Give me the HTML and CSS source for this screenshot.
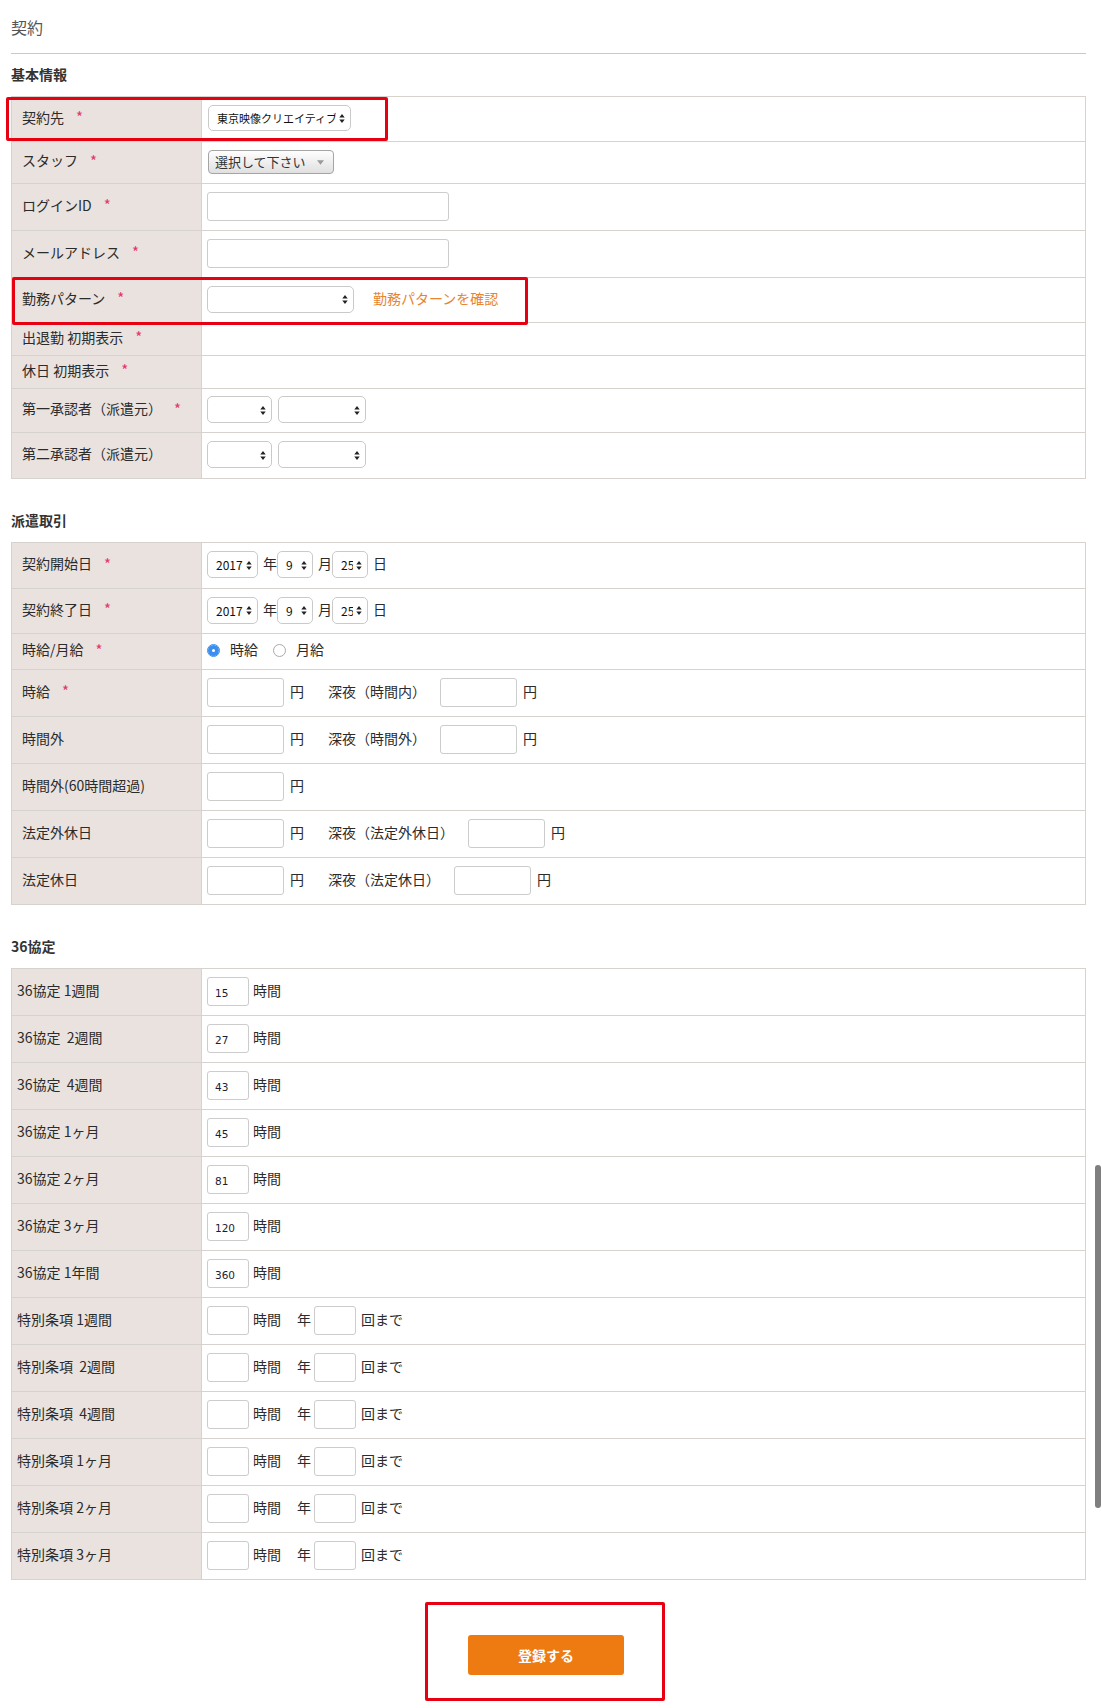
FILE: index.html
```html
<!DOCTYPE html>
<html lang="ja">
<head>
    <meta charset="UTF-8">
    <meta name="viewport" content="width=device-width, initial-scale=1.0">
    <title>契約</title>
    <link rel="stylesheet" href="styles.css">
</head>
<body>
    <!-- shared select arrows -->
    <svg class="svg-defs" aria-hidden="true">
        <symbol id="updown" viewBox="0 0 6 10"><path d="M0 4L3 0L6 4Z M0 6L3 10L6 6Z"/></symbol>
        <symbol id="down" viewBox="0 0 8 5"><path d="M0 0H8L4 5Z"/></symbol>
    </svg>

    <div class="page">
        <h1 class="page-title">契約</h1>

        <!-- 基本情報 -->
        <h2 class="section-title first">基本情報</h2>
        <div class="form-table">
            <div class="row h45">
                <div class="label">契約先<span class="req">*</span></div>
                <div class="value">
                    <span class="select-wrap"><select class="sel sel-client"><option>東京映像クリエイティブ</option></select><svg class="arrows"><use href="#updown"/></svg></span>
                </div>
            </div>
            <div class="row h42">
                <div class="label">スタッフ<span class="req">*</span></div>
                <div class="value">
                    <span class="select-wrap"><select class="btn-select"><option>選択して下さい</option></select><svg class="arrow-down"><use href="#down"/></svg></span>
                </div>
            </div>
            <div class="row">
                <div class="label">ログインID<span class="req">*</span></div>
                <div class="value"><input type="text" class="text"></div>
            </div>
            <div class="row">
                <div class="label">メールアドレス<span class="req">*</span></div>
                <div class="value"><input type="text" class="text"></div>
            </div>
            <div class="row h45">
                <div class="label">勤務パターン<span class="req">*</span></div>
                <div class="value">
                    <span class="select-wrap"><select class="sel sel-pattern"><option></option></select><svg class="arrows"><use href="#updown"/></svg></span>
                    <a href="#" class="link">勤務パターンを確認</a>
                </div>
            </div>
            <div class="row h33">
                <div class="label">出退勤 初期表示<span class="req">*</span></div>
                <div class="value"></div>
            </div>
            <div class="row h33">
                <div class="label">休日 初期表示<span class="req">*</span></div>
                <div class="value"></div>
            </div>
            <div class="row h44">
                <div class="label">第一承認者（派遣元）<span class="req">*</span></div>
                <div class="value">
                    <span class="select-wrap"><select class="sel sel-ap1"><option></option></select><svg class="arrows"><use href="#updown"/></svg></span>
                    <span class="select-wrap gap6"><select class="sel sel-ap2"><option></option></select><svg class="arrows"><use href="#updown"/></svg></span>
                </div>
            </div>
            <div class="row h46">
                <div class="label">第二承認者（派遣元）</div>
                <div class="value">
                    <span class="select-wrap"><select class="sel sel-ap1"><option></option></select><svg class="arrows"><use href="#updown"/></svg></span>
                    <span class="select-wrap gap6"><select class="sel sel-ap2"><option></option></select><svg class="arrows"><use href="#updown"/></svg></span>
                </div>
            </div>
        </div>

        <!-- 派遣取引 -->
        <h2 class="section-title">派遣取引</h2>
        <div class="form-table">
            <div class="row h46">
                <div class="label">契約開始日<span class="req">*</span></div>
                <div class="value">
                    <span class="select-wrap"><select class="sel sel-year"><option>2017</option></select><svg class="arrows"><use href="#updown"/></svg></span>
                    <span class="unit-after-sel">年</span>
                    <span class="select-wrap"><select class="sel sel-md"><option>9</option></select><svg class="arrows"><use href="#updown"/></svg></span>
                    <span class="unit-after-sel">月</span>
                    <span class="select-wrap"><select class="sel sel-md"><option>25</option></select><svg class="arrows"><use href="#updown"/></svg></span>
                    <span class="unit-after-sel">日</span>
                </div>
            </div>
            <div class="row h45">
                <div class="label">契約終了日<span class="req">*</span></div>
                <div class="value">
                    <span class="select-wrap"><select class="sel sel-year"><option>2017</option></select><svg class="arrows"><use href="#updown"/></svg></span>
                    <span class="unit-after-sel">年</span>
                    <span class="select-wrap"><select class="sel sel-md"><option>9</option></select><svg class="arrows"><use href="#updown"/></svg></span>
                    <span class="unit-after-sel">月</span>
                    <span class="select-wrap"><select class="sel sel-md"><option>25</option></select><svg class="arrows"><use href="#updown"/></svg></span>
                    <span class="unit-after-sel">日</span>
                </div>
            </div>
            <div class="row h36">
                <div class="label">時給/月給<span class="req">*</span></div>
                <div class="value">
                    <label class="radio-label"><input type="radio" name="pay" class="radio" checked>時給</label>
                    <label class="radio-label second"><input type="radio" name="pay" class="radio">月給</label>
                </div>
            </div>
            <div class="row">
                <div class="label">時給<span class="req">*</span></div>
                <div class="value">
                    <input type="text" class="num"><span class="yen">円</span>
                    <span class="night">深夜（時間内）</span>
                    <input type="text" class="num"><span class="yen">円</span>
                </div>
            </div>
            <div class="row">
                <div class="label">時間外</div>
                <div class="value">
                    <input type="text" class="num"><span class="yen">円</span>
                    <span class="night">深夜（時間外）</span>
                    <input type="text" class="num"><span class="yen">円</span>
                </div>
            </div>
            <div class="row">
                <div class="label">時間外(60時間超過)</div>
                <div class="value">
                    <input type="text" class="num"><span class="yen">円</span>
                </div>
            </div>
            <div class="row">
                <div class="label">法定外休日</div>
                <div class="value">
                    <input type="text" class="num"><span class="yen">円</span>
                    <span class="night">深夜（法定外休日）</span>
                    <input type="text" class="num"><span class="yen">円</span>
                </div>
            </div>
            <div class="row">
                <div class="label">法定休日</div>
                <div class="value">
                    <input type="text" class="num"><span class="yen">円</span>
                    <span class="night">深夜（法定休日）</span>
                    <input type="text" class="num"><span class="yen">円</span>
                </div>
            </div>
        </div>

        <!-- 36協定 -->
        <h2 class="section-title">36協定</h2>
        <div class="form-table compact">
            <div class="row">
                <div class="label">36協定 1週間</div>
                <div class="value"><input type="text" class="hours" value="15"><span class="hour-unit">時間</span></div>
            </div>
            <div class="row">
                <div class="label">36協定&nbsp; 2週間</div>
                <div class="value"><input type="text" class="hours" value="27"><span class="hour-unit">時間</span></div>
            </div>
            <div class="row">
                <div class="label">36協定&nbsp; 4週間</div>
                <div class="value"><input type="text" class="hours" value="43"><span class="hour-unit">時間</span></div>
            </div>
            <div class="row">
                <div class="label">36協定 1ヶ月</div>
                <div class="value"><input type="text" class="hours" value="45"><span class="hour-unit">時間</span></div>
            </div>
            <div class="row">
                <div class="label">36協定 2ヶ月</div>
                <div class="value"><input type="text" class="hours" value="81"><span class="hour-unit">時間</span></div>
            </div>
            <div class="row">
                <div class="label">36協定 3ヶ月</div>
                <div class="value"><input type="text" class="hours" value="120"><span class="hour-unit">時間</span></div>
            </div>
            <div class="row">
                <div class="label">36協定 1年間</div>
                <div class="value"><input type="text" class="hours" value="360"><span class="hour-unit">時間</span></div>
            </div>
            <div class="row">
                <div class="label">特別条項 1週間</div>
                <div class="value"><input type="text" class="hours"><span class="hour-unit">時間</span><span class="year">年</span><input type="text" class="hours times"><span class="until">回まで</span></div>
            </div>
            <div class="row">
                <div class="label">特別条項&nbsp; 2週間</div>
                <div class="value"><input type="text" class="hours"><span class="hour-unit">時間</span><span class="year">年</span><input type="text" class="hours times"><span class="until">回まで</span></div>
            </div>
            <div class="row">
                <div class="label">特別条項&nbsp; 4週間</div>
                <div class="value"><input type="text" class="hours"><span class="hour-unit">時間</span><span class="year">年</span><input type="text" class="hours times"><span class="until">回まで</span></div>
            </div>
            <div class="row">
                <div class="label">特別条項 1ヶ月</div>
                <div class="value"><input type="text" class="hours"><span class="hour-unit">時間</span><span class="year">年</span><input type="text" class="hours times"><span class="until">回まで</span></div>
            </div>
            <div class="row">
                <div class="label">特別条項 2ヶ月</div>
                <div class="value"><input type="text" class="hours"><span class="hour-unit">時間</span><span class="year">年</span><input type="text" class="hours times"><span class="until">回まで</span></div>
            </div>
            <div class="row">
                <div class="label">特別条項 3ヶ月</div>
                <div class="value"><input type="text" class="hours"><span class="hour-unit">時間</span><span class="year">年</span><input type="text" class="hours times"><span class="until">回まで</span></div>
            </div>
        </div>

        <div class="actions">
            <button type="submit" class="submit">登録する</button>
        </div>

        <!-- annotation marks -->
        <div class="mark mark-client"></div>
        <div class="mark mark-pattern"></div>
        <div class="mark mark-submit"></div>

        <div class="scrollbar"></div>
    </div>
</body>
</html>
```

FILE: styles.css
```css
/* General */
body {
    margin: 0;
    background: #fff;
    color: #2b2b2b;
    font-family: "Noto Sans CJK JP", "Liberation Sans", sans-serif;
    font-size: 14px;
}
.svg-defs {
    position: absolute;
    width: 0;
    height: 0;
}
.page {
    position: relative;
    width: 1075px;
    height: 1692px;
    padding: 16px 16px 0 11px;
}
.page-title {
    margin: 0;
    padding-bottom: 15px;
    border-bottom: 1px solid #c9c9c9;
    font-size: 16px;
    font-weight: normal;
    line-height: 22px;
    color: #555;
}
.section-title {
    margin: 31px 0 12px;
    font-size: 14px;
    font-weight: bold;
    line-height: 20px;
    color: #333;
}
.section-title.first {
    margin-top: 10px;
}

/* Form table */
.form-table {
    border: 1px solid #d6d2ce;
    border-bottom: none;
}
.row {
    display: grid;
    grid-template-columns: 190px 1fr;
    height: 47px;
    box-sizing: border-box;
    border-bottom: 1px solid #d6d2ce;
}
.row.h33 { height: 33px; }
.row.h36 { height: 36px; }
.row.h42 { height: 42px; }
.row.h44 { height: 44px; }
.row.h45 { height: 45px; }
.row.h46 { height: 46px; }
.label {
    display: flex;
    align-items: center;
    padding: 0 0 5px 10px;
    background: #e9e2df;
    border-right: 1px solid #d6d2ce;
    white-space: nowrap;
}
.compact .label {
    padding-left: 5px;
}
.value {
    display: flex;
    align-items: center;
    padding: 0 0 2px 5px;
    white-space: nowrap;
}
.req {
    margin-left: 12px;
    color: #e8336a;
    font-size: 15px;
}

/* Selects */
.select-wrap {
    position: relative;
    display: inline-flex;
}
.select-wrap.gap6 {
    margin-left: 6px;
}
.sel {
    -webkit-appearance: none;
    appearance: none;
    box-sizing: border-box;
    height: 27px;
    margin: 0;
    padding: 0 14px 0 8px;
    background: #fff;
    border: 1px solid #cacaca;
    border-radius: 5px;
    font-family: "Noto Sans CJK JP", sans-serif;
    font-size: 11px;
    color: #111;
}
.sel-client { width: 143px; height: 26px; margin-left: 1px; }
.sel-pattern { width: 147px; }
.sel-ap1 { width: 65px; }
.sel-ap2 { width: 88px; }
.sel-year { width: 51px; font-size: 12px; }
.sel-md { width: 36px; font-size: 12px; }
.arrows {
    position: absolute;
    right: 6px;
    top: 50%;
    width: 6px;
    height: 9px;
    margin-top: -4px;
    fill: #222;
    pointer-events: none;
}
.btn-select {
    -webkit-appearance: none;
    appearance: none;
    box-sizing: border-box;
    width: 126px;
    height: 24px;
    margin: 0 0 0 1px;
    padding: 0 0 0 6px;
    background: linear-gradient(#fefefe, #e0e0e0);
    border: 1px solid #a5a5a5;
    border-radius: 4px;
    font-family: "Noto Sans CJK JP", sans-serif;
    font-size: 13px;
    color: #333;
}
.arrow-down {
    position: absolute;
    right: 10px;
    top: 50%;
    width: 7px;
    height: 5px;
    margin-top: -2px;
    fill: #9a9a9a;
    pointer-events: none;
}
.link {
    margin-left: 19px;
    color: #e8842f;
    text-decoration: none;
}

/* text beside the controls sits a little high */
.unit-after-sel,
.link,
.yen,
.night,
.hour-unit,
.year,
.until,
.radio-label {
    padding-bottom: 3px;
}
.unit-after-sel { margin-left: 5px; }

/* Inputs */
.text,
.num,
.hours {
    box-sizing: border-box;
    height: 29px;
    margin: 0;
    background: #fff;
    border: 1px solid #cccccc;
    border-radius: 3px;
}
.text { width: 242px; }
.num { width: 77px; }
.hours {
    width: 42px;
    padding: 3px 0 0 7px;
    font-family: "DejaVu Sans", sans-serif;
    font-size: 10.5px;
    color: #1d1d33;
}
.yen { margin-left: 6px; }
.night { margin: 0 14px 0 24px; }
.hour-unit { margin-left: 4px; }
.year { margin: 0 3px 0 16px; }
.until { margin-left: 5px; }

/* Radios */
.radio-label {
    display: inline-flex;
    align-items: center;
}
.radio-label.second {
    margin-left: 15px;
}
.radio {
    -webkit-appearance: none;
    appearance: none;
    box-sizing: border-box;
    width: 13px;
    height: 13px;
    margin: 2px 10px 0 0;
    background: #fff;
    border: 1px solid #a9a9a9;
    border-radius: 50%;
}
.radio:checked {
    border-color: #3a8ef0;
    box-shadow: inset 0 0 0 4px #3a8ef0;
}

/* Submit */
.actions {
    display: flex;
    justify-content: center;
    margin-top: 55px;
}
.submit {
    width: 156px;
    height: 40px;
    margin-right: 5px;
    background: #ee7b11;
    color: #fff;
    border: none;
    border-radius: 3px;
    font-family: "Noto Sans CJK JP", sans-serif;
    font-size: 14px;
    font-weight: bold;
}

/* Red annotation boxes */
.mark {
    position: absolute;
    box-sizing: border-box;
    border: 3px solid #e60012;
    border-radius: 2px;
    pointer-events: none;
}
.mark-client { left: 6px; top: 97px; width: 382px; height: 44px; }
.mark-pattern { left: 12px; top: 277px; width: 516px; height: 48px; }
.mark-submit { left: 425px; top: 1602px; width: 240px; height: 99px; }

.scrollbar {
    position: absolute;
    left: 1095px;
    top: 1165px;
    width: 6px;
    height: 343px;
    border-radius: 3px;
    background: #7f7f7f;
}
```
